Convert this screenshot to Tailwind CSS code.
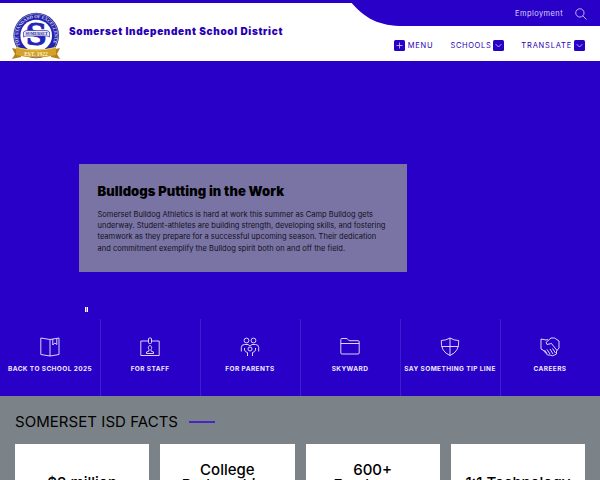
<!DOCTYPE html>
<html lang="en">
<head>
  <meta charset="UTF-8">
  <meta name="viewport" content="width=device-width, initial-scale=1.0">
  <title>Somerset Independent School District</title>
  <script src="https://cdn.jsdelivr.net/npm/@tailwindcss/browser@4"></script>
</head>
<body class="h-[480px] overflow-hidden bg-white font-['Inter',sans-serif] text-black">
  <!-- Header -->
  <header class="relative flex h-[61px] border-t-3 border-[#2800c8] bg-white">
    <svg class="absolute right-0 -top-[3px]" width="250" height="27" viewBox="0 0 250 27" fill="#2800c8"><path d="M0 0H250V26H54C29 26 15 19 0 1Z"/></svg>

    <a href="#" class="ml-[11px] mt-[9px] h-[48px] w-[50px] shrink-0">
      <svg width="50" height="48" viewBox="0 0 50 48">
        <circle cx="25.200" cy="23.500" r="22.800" fill="#25258f"/>
        <circle cx="25.200" cy="23.500" r="21.700" fill="none" stroke="#c9c9ef" stroke-width=".6"/>
        <circle cx="25.200" cy="23.500" r="21" fill="#2222ae"/>
        <circle cx="25.200" cy="23.500" r="15.800" fill="#fff"/>
        <path id="ring" d="M9.500 33A18.100 18.100 0 1 1 41 33" fill="none"/>
        <text font-family="Liberation Serif" font-size="4.500" font-weight="700" fill="#d4d4f6"><textPath href="#ring" textLength="73">THE STANDARD OF EXCELLENCE</textPath></text>
        <text x="25.200" y="33" text-anchor="middle" font-family="DejaVu Serif" font-size="29" font-weight="700" fill="#2424b8" stroke="#2424b8" stroke-width=".8">S</text>
        <path d="M12.500 20L15 18.500H36L38.500 20V25L36 24H15L12.500 25Z" fill="#e9e9fb" stroke="#3434a9" stroke-width=".7"/>
        <text x="25.500" y="23" text-anchor="middle" font-family="Liberation Serif" font-size="4" font-weight="700" fill="#25258f">SOMERSET</text>
        <path d="M1 36L10 38V45L1 47L4 42ZM49 36L40 38V45L49 47L46 42Z" fill="#b68117"/>
        <path d="M5 35Q25 40 45 35V43Q25 48 5 43Z" fill="#d3a12d"/>
        <path d="M5 35.500Q25 40.500 45 35.500" fill="none" stroke="#edcf70" stroke-width="1"/>
        <text x="25" y="43.500" text-anchor="middle" font-family="Liberation Serif" font-size="5.500" font-weight="700" fill="#fff3c5">EST. 1922</text>
      </svg>
    </a>
    <h1 class="ml-2 mt-[22px] whitespace-nowrap text-[10px] leading-[13px] font-black tracking-[0.65px] text-[#2800b4]">Somerset Independent School District</h1>

    <div class="relative ml-auto mr-[15px] flex flex-col items-end">
      <div class="-mr-[2px] flex h-[23px] items-center gap-[12px] pb-[2px] text-[7.5px] tracking-[0.4px] text-[#dcd4ff]">
        <a href="#">Employment</a>
        <svg width="12" height="12" viewBox="0 0 13 13" fill="none" stroke="currentColor" stroke-width=".9"><circle cx="5.300" cy="5.300" r="4.500"/><path d="M8.500 8.500L12.500 12.500"/></svg>
      </div>
      <nav class="mt-[14px] flex h-[11px] items-center gap-[17px] text-[7.5px] tracking-[0.65px] text-[#2800b4]">
        <a href="#" class="flex items-center gap-[3px]">
          <svg width="11" height="11" viewBox="0 0 11 11" fill="none"><rect width="11" height="11" rx="1.500" fill="#2800c8"/><path d="M2.500 5.500H8.500M5.500 2.500V8.500" stroke="#d8d0ff" stroke-width=".8"/></svg>
          <span class="tracking-[0.8px]">MENU</span>
        </a>
        <a href="#" class="flex items-center gap-[2px]">
          <span>SCHOOLS</span>
          <svg width="11" height="11" viewBox="0 0 11 11" fill="none"><rect width="11" height="11" rx="1.500" fill="#2800c8"/><path d="M2.700 4.200L5.500 7L8.300 4.200" stroke="#d8d0ff" stroke-width=".8"/></svg>
        </a>
        <a href="#" class="flex items-center gap-[2px]">
          <span class="tracking-[0.8px]">TRANSLATE</span>
          <svg width="11" height="11" viewBox="0 0 11 11" fill="none"><rect width="11" height="11" rx="1.500" fill="#2800c8"/><path d="M2.700 4.200L5.500 7L8.300 4.200" stroke="#d8d0ff" stroke-width=".8"/></svg>
        </a>
      </nav>
    </div>
  </header>

  <!-- Hero slide -->
  <section class="h-[258px] bg-[#2800c8] pl-[79px] pt-[103px]">
    <div class="h-[108px] w-[328px] bg-[#7974a4] pl-[18.5px] pt-[18px]">
      <h2 class="text-[13px] leading-[18px] font-black tracking-[0.08px]">Bulldogs Putting in the Work</h2>
      <p class="mt-[9px] whitespace-nowrap text-[7.5px] leading-[11.200px] tracking-[0.01px] text-[#11101c]">Somerset Bulldog Athletics is hard at work this summer as Camp Bulldog gets<br>underway. Student-athletes are building strength, developing skills, and fostering<br>teamwork as they prepare for a successful upcoming season. Their dedication<br>and commitment exemplify the Bulldog spirit both on and off the field.</p>
    </div>
    <button class="ml-[6px] mt-[35px] flex bg-[#8f7ce2]" aria-label="Pause">
      <span class="mr-px h-[5px] w-px bg-white"></span>
      <span class="h-[5px] w-px bg-white"></span>
    </button>
  </section>

  <!-- Quick links -->
  <nav class="grid h-[77px] grid-cols-6 bg-[#2800c8] text-center text-[6.5px] leading-[10px] font-bold tracking-[0.4px] whitespace-nowrap text-[#eeeaff]">
    <a href="#" class="flex flex-col items-center gap-[7px] pt-[18px]">
      <svg width="20" height="20" viewBox="0 0 20 20" fill="none" stroke="currentColor" stroke-width=".9"><path d="M10 2.500L.8 1V17.500L10 19L19 17.500V1L10 2.500V19M12.800 2V8L14.800 6L16.800 7.500V1.500"/></svg>
      <span>BACK TO SCHOOL 2025</span>
    </a>
    <a href="#" class="flex flex-col items-center gap-[7px] border-l border-[#3d1ecf] pt-[18px] pr-px">
      <svg width="20" height="20" viewBox="0 0 20 20" fill="none" stroke="currentColor" stroke-width=".9"><path d="M8.500 4H.8V18.500H19.200V4H11.500"/><rect x="8.500" y="1" width="3" height="5.500" rx="1"/><path d="M8.500 11.500A1.700 2 0 1 1 11.500 11.500L11 12.500V14L13.500 15V16.500H6.500V15L9 14V12.500Z"/></svg>
      <span>FOR STAFF</span>
    </a>
    <a href="#" class="flex flex-col items-center gap-[7px] border-l border-[#3d1ecf] pt-[18px] pr-px">
      <svg width="20" height="20" viewBox="0 0 20 20" fill="none" stroke="currentColor" stroke-width=".9"><circle cx="6.500" cy="3.500" r="2.400"/><circle cx="13.500" cy="3.500" r="2.400"/><circle cx="10" cy="12" r="2"/><path d="M1.300 14.500V10.500Q1.300 7.500 4.500 7.500H8L10 9L12 7.500H15.500Q18.700 7.500 18.700 10.500V14.500M4.500 11V13Q5 15 7.500 15.500M12.500 15.500Q15 15 15.500 13V11M7.500 15.500V19M12.500 15.500V19"/></svg>
      <span>FOR PARENTS</span>
    </a>
    <a href="#" class="flex flex-col items-center gap-[7px] border-l border-[#3d1ecf] pt-[18px] pr-px">
      <svg width="20" height="20" viewBox="0 0 20 20" fill="none" stroke="currentColor" stroke-width=".9"><path d="M.8 6.500H19.200M.8 2.500Q.8 1.500 1.800 1.500H7L9 3.700H18Q19.200 3.700 19.200 5V16Q19.200 17 18 17H2Q.8 17 .8 16Z"/></svg>
      <span>SKYWARD</span>
    </a>
    <a href="#" class="flex flex-col items-center gap-[7px] border-l border-[#3d1ecf] pt-[18px] pr-px">
      <svg width="20" height="20" viewBox="0 0 20 20" fill="none" stroke="currentColor" stroke-width=".9"><path d="M10 1Q6 3.500 1.300 3.500Q.5 14.500 10 18.500Q19.500 14.500 18.700 3.500Q14 3.500 10 1ZM10 1V18.500M1.500 9.500H18.500"/></svg>
      <span>SAY SOMETHING TIP LINE</span>
    </a>
    <a href="#" class="flex flex-col items-center gap-[7px] border-l border-[#3d1ecf] pt-[18px] pr-px">
      <svg width="20" height="20" viewBox="0 0 20 20" fill="none" stroke="currentColor" stroke-width=".9" stroke-linejoin="round"><path d="M8 2.500L6 3L1 2V12L3 13L7.500 18H10L12.500 18.800L14.500 18L16.500 17V14L19 11V4L14.500 1H11L6 5.500L7 7.500L11.500 6.500L17 13.500M4.500 13L7 16.500M7 12.500L10 17M10 12L13 17M12.500 11.500L15.500 16"/></svg>
      <span>CAREERS</span>
    </a>
  </nav>

  <!-- Facts -->
  <section class="h-[84px] overflow-hidden bg-[#7b8389] px-[15px] pt-[16px]">
    <div class="flex items-center gap-[11px]">
      <h2 class="text-[15px] leading-[20px] tracking-[0.05px]">SOMERSET ISD FACTS</h2>
      <span class="h-[1.5px] w-[26px] bg-[#4a24c8]"></span>
    </div>
    <div class="mt-[12px] grid h-[120px] grid-cols-4 gap-[11px] text-center text-[15px] leading-[15px] font-[450]">
      <div class="bg-white pt-[31px]">$3 million</div>
      <div class="bg-white pt-[18px]">College<br>Partnerships</div>
      <div class="bg-white pt-[18px]">600+<br>Employees</div>
      <div class="bg-white pt-[31px]">1:1 Technology</div>
    </div>
  </section>
</body>
</html>
